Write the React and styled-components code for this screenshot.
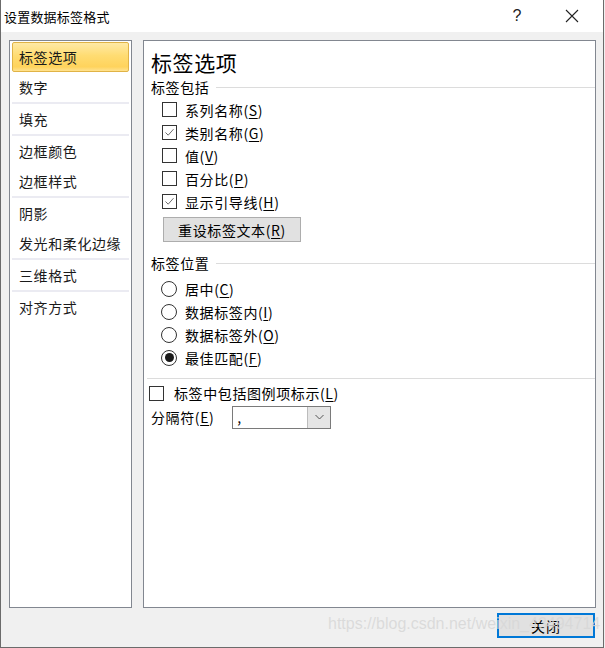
import styled, { createGlobalStyle } from "styled-components";

const GlobalStyle = createGlobalStyle`
  html, body {
    margin: 0;
    padding: 0;
    background: #f0f0f0;
  }
  body {
    font-family: "Noto Sans CJK SC", "Liberation Sans", sans-serif;
    font-size: 14px;
    color: #000;
  }
`;

const Window = styled.div`
  position: relative;
  width: 604px;
  height: 648px;
  box-sizing: border-box;
  border-left: 1px solid #6b6b6b;
  border-right: 1px solid #6b6b6b;
  border-bottom: 1px solid #6b6b6b;
  background: #f0f0f0;
  display: flex;
  flex-direction: column;
  overflow: hidden;
`;

const TitleBar = styled.div`
  height: 32px;
  background: #fff;
  display: flex;
  align-items: center;
  padding-left: 3px;
  font-size: 13px;
`;

const TitleText = styled.div`
  flex: 1;
  letter-spacing: 0.2px;
`;

const TitleButton = styled.div`
  width: ${(p) => p.$w}px;
  display: flex;
  justify-content: center;
  align-items: center;
  font-family: "Liberation Sans", sans-serif;
  font-size: 16px;
  color: #222;
`;

const Body = styled.div`
  flex: 1;
  display: flex;
  flex-direction: column;
  padding: 8px 7px 9px 8px;
`;

const Panels = styled.div`
  display: flex;
  gap: 11px;
  height: 568px;
`;

const Panel = styled.div`
  background: #fff;
  border: 1px solid #828790;
  box-sizing: border-box;
`;

const Nav = styled(Panel)`
  width: 123px;
  padding: 1px 2px;
  display: flex;
  flex-direction: column;
`;

const NavItem = styled.div`
  height: 30px;
  display: flex;
  align-items: center;
  padding-left: 7px;
  box-sizing: border-box;
  letter-spacing: 0.6px;
  color: #1a1a1a;
  ${(p) =>
    p.$active &&
    `
    background: linear-gradient(#ffeaa6, #ffdc72 45%, #ffd35c 85%, #ffe290);
    border: 1px solid #e0b346;
    border-radius: 2px;
    padding-left: 6px;
  `}
`;

const NavSep = styled.div`
  height: 2px;
  background: #ebebf2;
`;

const Content = styled(Panel)`
  flex: 1;
  padding: 6px 0 0 7px;
  display: flex;
  flex-direction: column;
`;

const Heading = styled.div`
  font-size: 21px;
  line-height: 30px;
  letter-spacing: 0.6px;
`;

const Section = styled.div`
  display: flex;
  align-items: center;
  gap: 7px;
  height: 20px;
  letter-spacing: 0.6px;
  margin-top: ${(p) => p.$top || 0}px;
  &::after {
    content: "";
    flex: 1;
    height: 1px;
    background: #dcdcdc;
  }
`;

const OptionList = styled.div`
  display: flex;
  flex-direction: column;
  padding-left: ${(p) => p.$indent}px;
  margin-top: ${(p) => p.$top}px;
`;

const Option = styled.label`
  display: flex;
  align-items: center;
  height: 23px;
  gap: ${(p) => p.$gap}px;
  letter-spacing: 0.6px;
`;

const Box = styled.span`
  width: 15px;
  height: 15px;
  box-sizing: border-box;
  border: 1px solid #333;
  background: #fff;
  display: flex;
  align-items: center;
  justify-content: center;
`;

const Radio = styled.span`
  width: 16px;
  height: 16px;
  box-sizing: border-box;
  border: 1px solid #333;
  border-radius: 50%;
  background: #fff;
  display: flex;
  align-items: center;
  justify-content: center;
  &::after {
    content: "";
    width: 9px;
    height: 9px;
    border-radius: 50%;
    background: ${(p) => (p.$on ? "#1a1a1a" : "transparent")};
  }
`;

const Key = styled.span`
  text-decoration: underline;
  text-underline-offset: 2px;
`;

const Button = styled.div`
  margin: 4px 0 0 12px;
  width: 138px;
  height: 25px;
  box-sizing: border-box;
  background: #e1e1e1;
  border: 1px solid #adadad;
  display: flex;
  align-items: center;
  justify-content: center;
  letter-spacing: 0.6px;
`;

const Divider = styled.div`
  height: 1px;
  background: #dcdcdc;
  margin: 9px 0 2px -4px;
`;

const Row = styled.div`
  display: flex;
  align-items: center;
  gap: ${(p) => p.$gap}px;
  height: 24px;
  letter-spacing: 0.6px;
  margin-left: ${(p) => p.$left || 0}px;
`;

const Select = styled.div`
  width: 99px;
  height: 23px;
  box-sizing: border-box;
  border: 1px solid #7a7a7a;
  background: #fff;
  display: flex;
`;

const SelectValue = styled.div`
  flex: 1;
  padding-left: 4px;
  line-height: 20px;
`;

const SelectArrow = styled.div`
  width: 22px;
  background: #e5e5e5;
  border-left: 1px solid #bcbcbc;
  display: flex;
  align-items: center;
  justify-content: center;
`;

const Footer = styled.div`
  display: flex;
  justify-content: flex-end;
  padding-top: 5px;
  padding-right: 1px;
`;

const CloseButton = styled.div`
  width: 98px;
  height: 25px;
  box-sizing: border-box;
  border: 2px solid #0078d7;
  background: #e1e1e1;
  display: flex;
  align-items: center;
  justify-content: center;
  letter-spacing: 1px;
`;

const Watermark = styled.div`
  position: absolute;
  left: 327px;
  top: 615px;
  font-family: "Liberation Sans", sans-serif;
  font-size: 16px;
  color: rgba(215, 215, 215, 0.85);
  pointer-events: none;
  white-space: nowrap;
`;

const Check = () => (
  <svg width="13" height="13" viewBox="0 0 13 13">
    <path d="M2.5 6.5 L5.2 9.2 L10.5 3.2" fill="none" stroke="#6d6d6d" strokeWidth="1" />
  </svg>
);

const navGroups = [
  ["标签选项", "数字"],
  ["填充"],
  ["边框颜色", "边框样式"],
  ["阴影", "发光和柔化边缘"],
  ["三维格式"],
  ["对齐方式"],
];

const includes = [
  { text: "系列名称", key: "S", on: false },
  { text: "类别名称", key: "G", on: true },
  { text: "值", key: "V", on: false },
  { text: "百分比", key: "P", on: false },
  { text: "显示引导线", key: "H", on: true },
];

const positions = [
  { text: "居中", key: "C", on: false },
  { text: "数据标签内", key: "I", on: false },
  { text: "数据标签外", key: "O", on: false },
  { text: "最佳匹配", key: "F", on: true },
];

const Label = ({ text, k }) => (
  <span>
    {text}(<Key>{k}</Key>)
  </span>
);

export default function App() {
  return (
    <>
      <GlobalStyle />
      <Window>
        <TitleBar>
          <TitleText>设置数据标签格式</TitleText>
          <TitleButton $w={48}>?</TitleButton>
          <TitleButton $w={62}>
            <svg width="14" height="14" viewBox="0 0 14 14">
              <path d="M1 1 L13 13 M13 1 L1 13" stroke="#222" strokeWidth="1.1" />
            </svg>
          </TitleButton>
        </TitleBar>
        <Body>
          <Panels>
            <Nav>
              {navGroups.map((group, gi) => (
                <div key={gi}>
                  {gi > 0 && <NavSep />}
                  {group.map((item) => (
                    <NavItem key={item} $active={item === "标签选项"}>
                      {item}
                    </NavItem>
                  ))}
                </div>
              ))}
            </Nav>
            <Content>
              <Heading>标签选项</Heading>
              <Section>标签包括</Section>
              <OptionList $indent={11} $top={1}>
                {includes.map((o) => (
                  <Option key={o.key} $gap={8}>
                    <Box>{o.on && <Check />}</Box>
                    <Label text={o.text} k={o.key} />
                  </Option>
                ))}
              </OptionList>
              <Button>
                <Label text="重设标签文本" k="R" />
              </Button>
              <Section $top={11}>标签位置</Section>
              <OptionList $indent={10} $top={4}>
                {positions.map((o) => (
                  <Option key={o.key} $gap={8}>
                    <Radio $on={o.on} />
                    <Label text={o.text} k={o.key} />
                  </Option>
                ))}
              </OptionList>
              <Divider />
              <Row $gap={10} $left={-2}>
                <Box />
                <Label text="标签中包括图例项标示" k="L" />
              </Row>
              <Row $gap={18}>
                <Label text="分隔符" k="E" />
                <Select>
                  <SelectValue>,</SelectValue>
                  <SelectArrow>
                    <svg width="9" height="6" viewBox="0 0 9 6">
                      <path d="M0.5 1 L4.5 5 L8.5 1" fill="none" stroke="#555" strokeWidth="1" />
                    </svg>
                  </SelectArrow>
                </Select>
              </Row>
            </Content>
          </Panels>
          <Footer>
            <CloseButton>关闭</CloseButton>
          </Footer>
        </Body>
        <Watermark>https://blog.csdn.net/weixin_43494714</Watermark>
      </Window>
    </>
  );
}
